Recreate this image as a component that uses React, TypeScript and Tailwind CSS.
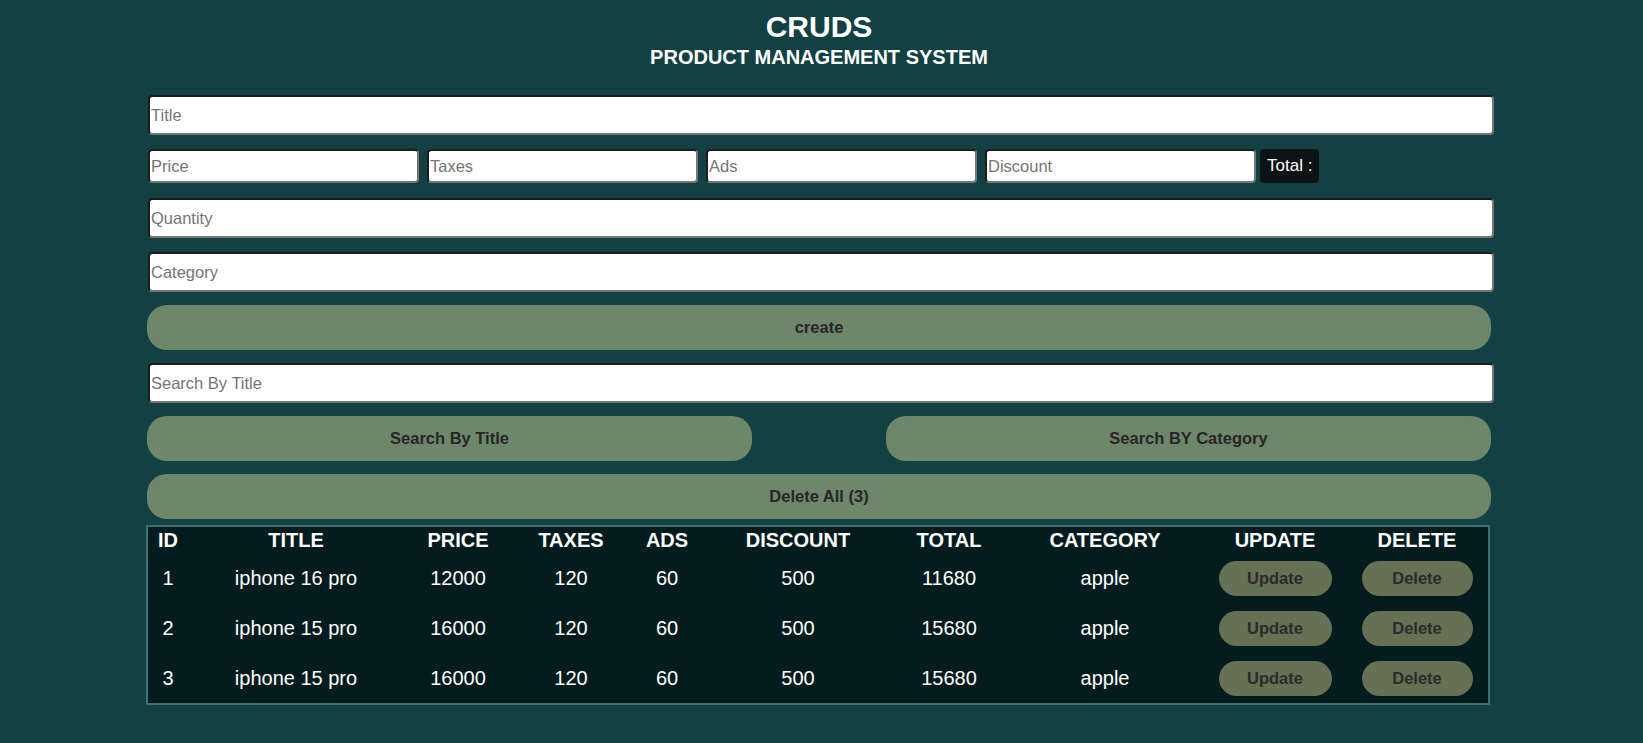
import { useState } from "react";

type Product = {
  id: number;
  title: string;
  price: number;
  taxes: number;
  ads: number;
  discount: number;
  category: string;
};

const products: Product[] = [
  { id: 1, title: "iphone 16 pro", price: 12000, taxes: 120, ads: 60, discount: 500, category: "apple" },
  { id: 2, title: "iphone 15 pro", price: 16000, taxes: 120, ads: 60, discount: 500, category: "apple" },
  { id: 3, title: "iphone 15 pro", price: 16000, taxes: 120, ads: 60, discount: 500, category: "apple" },
];

const columns = [
  { label: "ID", w: "w-[40px]" },
  { label: "TITLE", w: "w-[216px]" },
  { label: "PRICE", w: "w-[108px]" },
  { label: "TAXES", w: "w-[118px]" },
  { label: "ADS", w: "w-[74px]" },
  { label: "DISCOUNT", w: "w-[188px]" },
  { label: "TOTAL", w: "w-[114px]" },
  { label: "CATEGORY", w: "w-[198px]" },
  { label: "UPDATE", w: "w-[142px]" },
  { label: "DELETE", w: "w-[142px]" },
];

// inset-looking default input border: dark top/left, grey bottom/right
const inputCls =
  "block bg-white rounded-[4px] border-2 border-t-[#1c1c1c] border-l-[#1c1c1c] border-b-[#767676] border-r-[#767676] px-[1px] text-[16.5px] text-black placeholder:text-[#757575] outline-none";

const pillCls =
  "block h-[45px] rounded-[20px] bg-[#6e866a] text-[16.5px] font-bold text-[#262626]";

const rowBtnCls =
  "mx-auto block h-[35px] rounded-[18px] bg-[#667052] text-[16.5px] font-bold text-[#2b2b2b]";

function Field({ placeholder, className }: { placeholder: string; className: string }) {
  const [value, setValue] = useState("");
  return (
    <input
      value={value}
      onChange={(e) => setValue(e.target.value)}
      placeholder={placeholder}
      className={`${inputCls} ${className}`}
    />
  );
}

export default function App() {
  return (
    <div className="min-h-[743px] bg-[#134042] font-['Liberation_Sans',Arial,sans-serif] text-white">
      <div className="w-[1638px]">
        <div className="pt-[10px] text-center">
          <h1 className="text-[30px] font-bold leading-[34px]">CRUDS</h1>
          <h2 className="mt-[2px] text-[20px] font-bold leading-[23px]">PRODUCT MANAGEMENT SYSTEM</h2>
        </div>

        <div className="mx-auto mt-[26px] w-[1344px]">
          <Field placeholder="Title" className="ml-px w-[1346px] h-[40px]" />

          <div className="mt-[14px] ml-px flex items-center gap-[8px]">
            <Field placeholder="Price" className="w-[271px] h-[34px]" />
            <Field placeholder="Taxes" className="w-[271px] h-[34px]" />
            <Field placeholder="Ads" className="w-[271px] h-[34px]" />
            <Field placeholder="Discount" className="w-[271px] h-[34px]" />
            <div className="ml-[-4px] flex h-[34px] items-center rounded-[4px] bg-[#0c1315] px-[7px] text-[17px]">
              Total :
            </div>
          </div>

          <Field placeholder="Quantity" className="mt-[15px] ml-px w-[1346px] h-[40px]" />
          <Field placeholder="Category" className="mt-[14px] ml-px w-[1346px] h-[40px]" />

          <button type="button" className={`${pillCls} mt-[13px] w-full`}>
            create
          </button>

          <Field placeholder="Search By Title" className="mt-[13px] ml-px w-[1346px] h-[40px]" />

          <div className="mt-[13px] flex justify-between">
            <button type="button" className={`${pillCls} w-[605px]`}>
              Search By Title
            </button>
            <button type="button" className={`${pillCls} w-[605px]`}>
              Search BY Category
            </button>
          </div>

          <button type="button" className={`${pillCls} mt-[13px] w-full`}>
            Delete All (3)
          </button>

          <div className="mt-[6px] -ml-px w-[1344px] border-2 border-[#3e7171] bg-[#041c1e]">
            <table className="w-full table-fixed border-collapse text-center">
              <thead>
                <tr className="h-[26px]">
                  {columns.map((c) => (
                    <th key={c.label} className={`${c.w} p-0 text-[20px] font-bold leading-[26px]`}>
                      {c.label}
                    </th>
                  ))}
                </tr>
              </thead>
              <tbody>
                {products.map((p) => (
                  <tr key={p.id} className="h-[50px] text-[20px]">
                    <td className="p-0">{p.id}</td>
                    <td className="p-0">{p.title}</td>
                    <td className="p-0">{p.price}</td>
                    <td className="p-0">{p.taxes}</td>
                    <td className="p-0">{p.ads}</td>
                    <td className="p-0">{p.discount}</td>
                    <td className="p-0">{p.price + p.taxes + p.ads - p.discount}</td>
                    <td className="p-0">{p.category}</td>
                    <td className="p-0">
                      <button type="button" className={`${rowBtnCls} w-[113px]`}>
                        Update
                      </button>
                    </td>
                    <td className="p-0">
                      <button type="button" className={`${rowBtnCls} w-[111px]`}>
                        Delete
                      </button>
                    </td>
                  </tr>
                ))}
              </tbody>
            </table>
          </div>
        </div>
      </div>
    </div>
  );
}
